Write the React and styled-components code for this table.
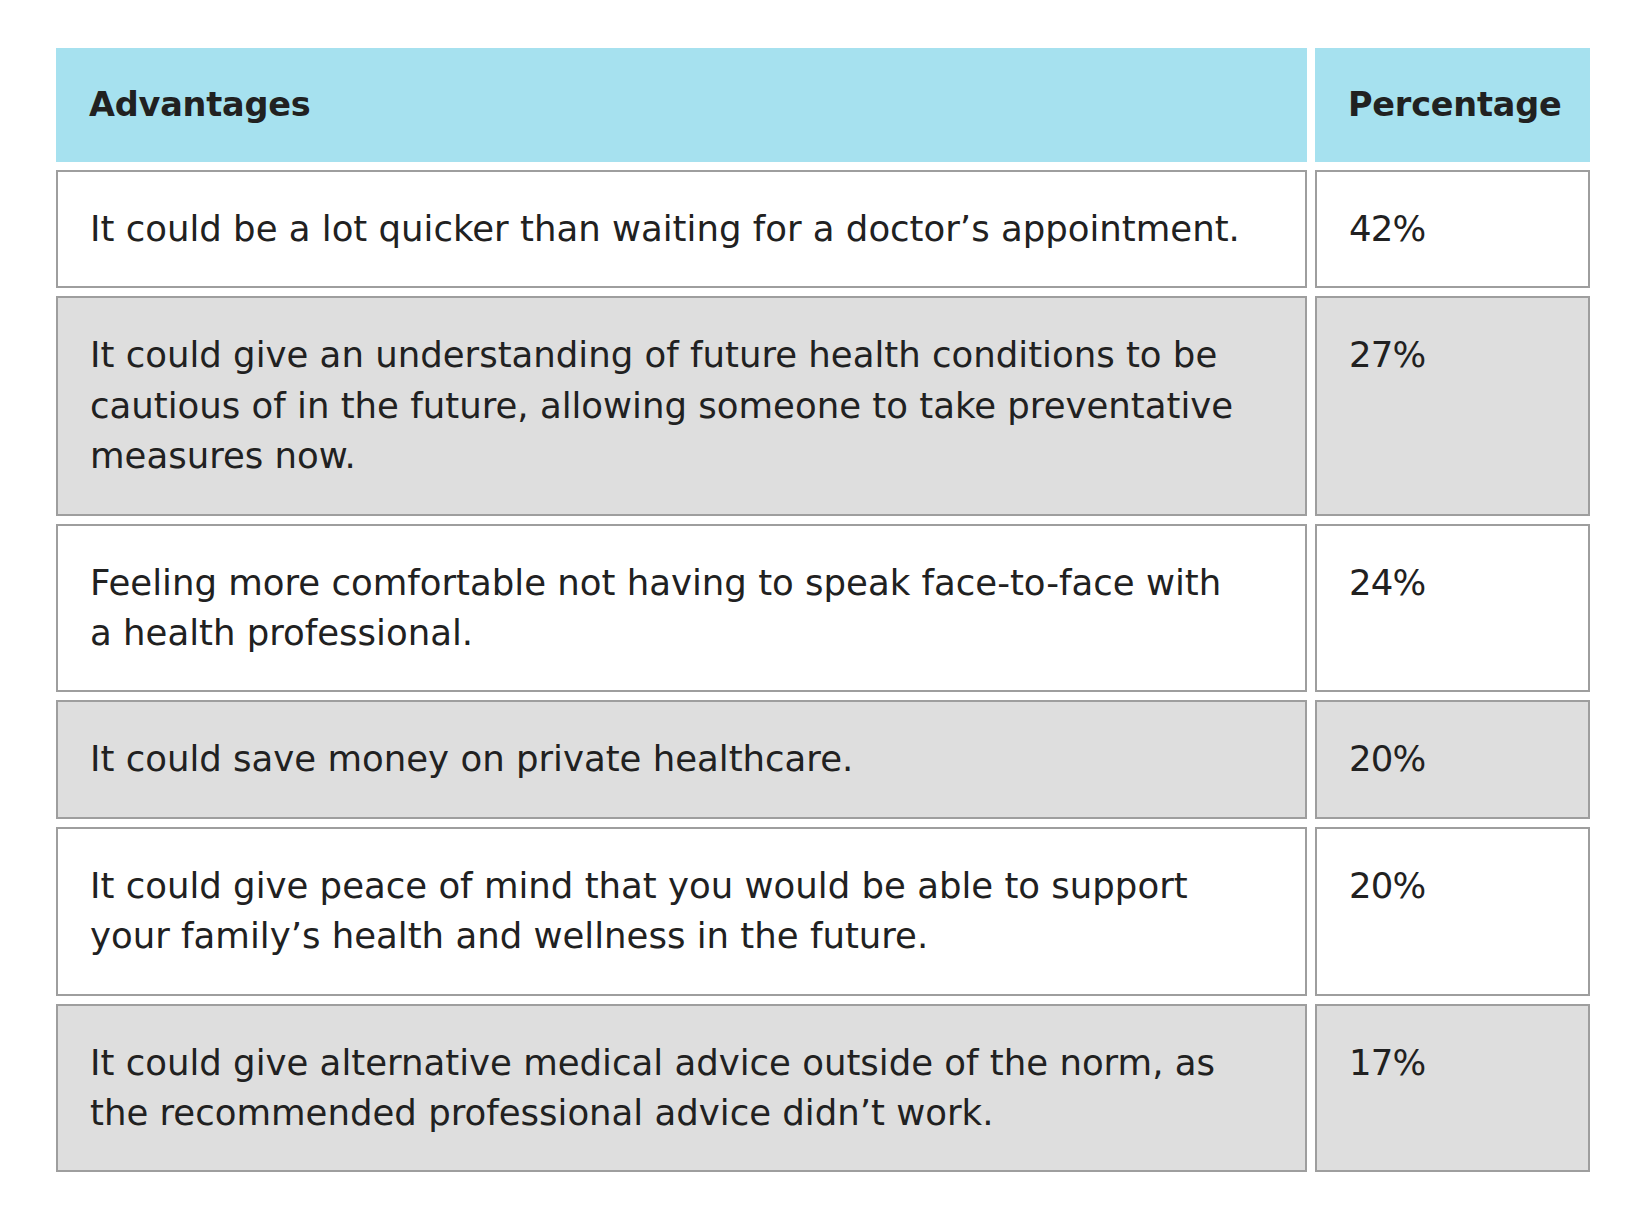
import React from "react";
import styled, { createGlobalStyle } from "styled-components";

// \u00A0 keeps short words with the next one so lines break as in the design
const rows = [
    {
        text: "It could be a lot quicker than waiting for a doctor’s appointment.",
        pct: "42%",
    },
    {
        text: "It could give an understanding of future health conditions to be cautious of in the future, allowing someone to take preventative measures now.",
        pct: "27%",
    },
    {
        text: "Feeling more comfortable not having to speak face-to-face with a\u00A0health professional.",
        pct: "24%",
    },
    {
        text: "It could save money on private healthcare.",
        pct: "20%",
    },
    {
        text: "It could give peace of mind that you would be able to support your family’s health and wellness in the future.",
        pct: "20%",
    },
    {
        text: "It could give alternative medical advice outside of the norm, as the recommended professional advice didn’t work.",
        pct: "17%",
    },
];

const GlobalStyle = createGlobalStyle`
    body {
        margin: 0;
        background: #ffffff;
        font-family: "DejaVu Sans", "Liberation Sans", sans-serif;
        color: #212121;
    }
`;

const Page = styled.div`
    padding: 48px 0 40px 56px;
`;

const Table = styled.div`
    display: grid;
    grid-template-columns: 1251px 275px;
    gap: 8px;
`;

const HeadCell = styled.div`
    background: #a6e1ef;
    padding: 32px 33px;
    font-size: 33.5px;
    font-weight: 700;
    line-height: 50px;
    letter-spacing: -0.2px;
`;

const Cell = styled.div`
    background: ${(p) => (p.$shaded ? "#dedede" : "#ffffff")};
    border: 2px solid #9e9e9e;
    padding: 32px;
    font-size: 35.5px;
    line-height: 50.4px;
`;

const Pct = styled.span`
    letter-spacing: -0.8px;
`;

const App = () => {
    return (
        <Page>
            <GlobalStyle />
            <Table role='table'>
                <HeadCell role='columnheader'>Advantages</HeadCell>
                <HeadCell role='columnheader'>Percentage</HeadCell>
                {rows.map((row, i) => (
                    <React.Fragment key={i}>
                        <Cell role='cell' $shaded={i % 2 === 1}>
                            {row.text}
                        </Cell>
                        <Cell role='cell' $shaded={i % 2 === 1}>
                            <Pct>{row.pct}</Pct>
                        </Cell>
                    </React.Fragment>
                ))}
            </Table>
        </Page>
    );
};

export default App;
